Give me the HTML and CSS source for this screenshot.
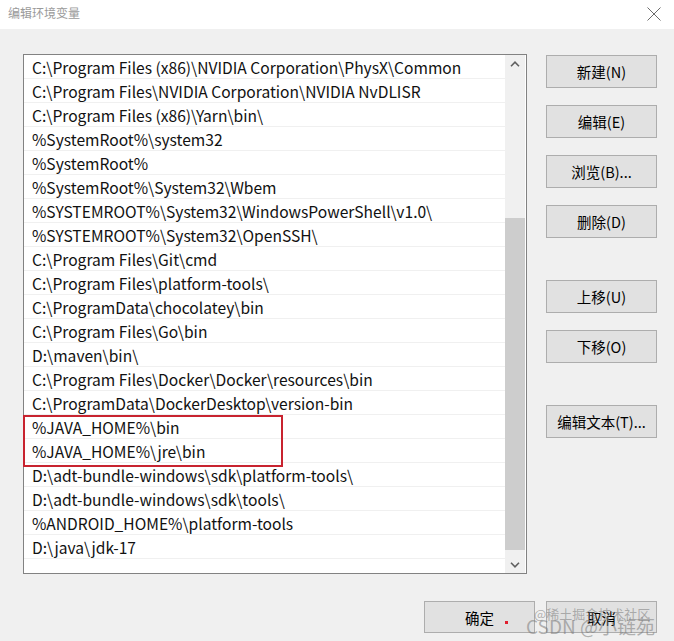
FILE: index.html
```html
<!DOCTYPE html>
<html lang="zh-CN">
<head>
<meta charset="utf-8">
<title>编辑环境变量</title>
<link rel="stylesheet" href="styles.css">
</head>
<body>
<div class="window">
  <div class="titlebar">
    <span class="title">编辑环境变量</span>
    <svg class="close" width="16" height="14" viewBox="0 0 16 14"><path d="M1.5 0.5 L14.5 13.5 M14.5 0.5 L1.5 13.5" stroke="#6b6b6b" stroke-width="1" fill="none"/></svg>
  </div>
  <div class="content">
    <div class="listbox">
      <ul class="rows">
        <li>C:\Program Files (x86)\NVIDIA Corporation\PhysX\Common</li>
        <li>C:\Program Files\NVIDIA Corporation\NVIDIA NvDLISR</li>
        <li>C:\Program Files (x86)\Yarn\bin\</li>
        <li>%SystemRoot%\system32</li>
        <li>%SystemRoot%</li>
        <li>%SystemRoot%\System32\Wbem</li>
        <li>%SYSTEMROOT%\System32\WindowsPowerShell\v1.0\</li>
        <li>%SYSTEMROOT%\System32\OpenSSH\</li>
        <li>C:\Program Files\Git\cmd</li>
        <li>C:\Program Files\platform-tools\</li>
        <li>C:\ProgramData\chocolatey\bin</li>
        <li>C:\Program Files\Go\bin</li>
        <li>D:\maven\bin\</li>
        <li>C:\Program Files\Docker\Docker\resources\bin</li>
        <li>C:\ProgramData\DockerDesktop\version-bin</li>
        <li>%JAVA_HOME%\bin</li>
        <li>%JAVA_HOME%\jre\bin</li>
        <li>D:\adt-bundle-windows\sdk\platform-tools\</li>
        <li>D:\adt-bundle-windows\sdk\tools\</li>
        <li>%ANDROID_HOME%\platform-tools</li>
        <li>D:\java\jdk-17</li>
      </ul>
      <div class="scrollbar">
        <div class="arrow">
          <svg width="10" height="6" viewBox="0 0 10 6"><path d="M1 5.2 L5 1.2 L9 5.2" stroke="#606060" stroke-width="1.6" fill="none"/></svg>
        </div>
        <div class="track"><div class="thumb"></div></div>
        <div class="arrow">
          <svg width="10" height="6" viewBox="0 0 10 6"><path d="M1 0.8 L5 4.8 L9 0.8" stroke="#606060" stroke-width="1.6" fill="none"/></svg>
        </div>
      </div>
      <div class="highlight"></div>
    </div>
    <div class="side">
      <button class="btn">新建(N)</button>
      <button class="btn">编辑(E)</button>
      <button class="btn">浏览(B)...</button>
      <button class="btn">删除(D)</button>
      <button class="btn btn-group">上移(U)</button>
      <button class="btn">下移(O)</button>
      <button class="btn btn-group">编辑文本(T)...</button>
    </div>
  </div>
  <div class="footer">
    <button class="btn ok">确定<span class="dot"></span></button>
    <button class="btn">取消</button>
    <div class="watermark">
      <span class="wm-small">@稀土掘金技术社区</span>
      <span class="wm-big">CSDN @小链苑</span>
    </div>
  </div>
</div>
</body>
</html>
```
FILE: styles.css
```css
* { box-sizing: border-box; }
html, body { margin: 0; padding: 0; }
body {
  width: 674px;
  height: 641px;
  overflow: hidden;
  background: #f0f0f0;
  font-family: "Noto Sans CJK SC", "Noto Sans", sans-serif;
}
.window { position: relative; width: 674px; height: 641px; }
.titlebar {
  height: 29px;
  background: #ffffff;
  display: flex;
  align-items: center;
  justify-content: space-between;
  padding: 0 12px 4px 8px;
}
.title { font-size: 12px; color: #9a9a9a; line-height: 1; }
.close { display: block; margin-top: 2px; }
.content {
  display: flex;
  padding: 25px 0 0 23px;
  gap: 19px;
}
.listbox {
  position: relative;
  width: 504px;
  height: 520px;
  border: 1px solid #828282;
  background: #ffffff;
  display: flex;
}
.rows {
  list-style: none;
  margin: 0;
  padding: 0;
  width: 481px;
}
.rows li {
  height: 24px;
  border-bottom: 1px solid #f0f0f0;
  padding-left: 8px;
  font-size: 15.6px;
  line-height: 24px;
  color: #111111;
  white-space: nowrap;
}
.scrollbar {
  width: 20px;
  height: 100%;
  background: #f0f0f0;
  display: flex;
  flex-direction: column;
}
.arrow {
  height: 17px;
  display: flex;
  align-items: center;
  justify-content: center;
}
.track { flex: 1; }
.thumb {
  margin-top: 146px;
  height: 332px;
  background: #cdcdcd;
}
.highlight {
  position: absolute;
  left: -1px;
  top: 360px;
  width: 260px;
  height: 52px;
  border: 2px solid #c8232f;
}
.side {
  display: flex;
  flex-direction: column;
  padding-top: 1px;
  gap: 17px;
}
.btn {
  width: 111px;
  height: 33px;
  background: #e1e1e1;
  border: 1px solid #adadad;
  font-family: "Noto Sans CJK SC", "Noto Sans", sans-serif;
  font-size: 14.5px;
  color: #000000;
  padding: 0;
  margin: 0;
  position: relative;
}
.btn-group { margin-top: 25px; }
.footer {
  position: relative;
  display: flex;
  justify-content: flex-end;
  gap: 11px;
  padding: 27px 17px 0 0;
}
.footer .btn { height: 32px; }
.dot {
  position: absolute;
  left: 80px;
  top: 19px;
  width: 3px;
  height: 3px;
  background: #e0202f;
}
.watermark {
  position: absolute;
  right: 14px;
  top: 30px;
  width: 134px;
  height: 36px;
  color: rgba(120, 120, 120, 0.55);
  pointer-events: none;
}
.wm-small {
  position: absolute;
  left: 8px;
  top: 0;
  font-size: 13px;
  white-space: nowrap;
}
.wm-big {
  position: absolute;
  left: 0;
  top: 8px;
  font-size: 19px;
  white-space: nowrap;
}
```
